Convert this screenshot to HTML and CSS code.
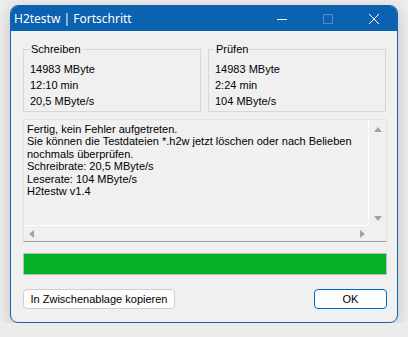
FILE: index.html
```html
<!DOCTYPE html>
<html lang="de">
<head>
  <meta charset="UTF-8" />
  <title>H2testw | Fortschritt</title>
  <link rel="stylesheet" href="styles.css">
</head>
<body>

<div class="window">
  <!-- Titelleiste -->
  <div class="titlebar">
    <span class="title">H2testw | Fortschritt</span>
    <div class="controls">
      <div class="ctl">
        <svg width="12" height="12" viewBox="0 0 12 12"><path d="M1 6.5h10" stroke="#fff" stroke-width="1"/></svg>
      </div>
      <div class="ctl">
        <svg width="12" height="12" viewBox="0 0 12 12"><rect x="1.5" y="1.5" width="9" height="9" fill="none" stroke="#4f8ccb" stroke-width="1"/></svg>
      </div>
      <div class="ctl">
        <svg width="12" height="12" viewBox="0 0 12 12"><path d="M1 1L11 11M11 1L1 11" stroke="#fff" stroke-width="1"/></svg>
      </div>
    </div>
  </div>

  <div class="content">
    <div class="groups">
      <fieldset class="group">
        <legend>Schreiben</legend>
        <div class="line">14983 MByte</div>
        <div class="line">12:10 min</div>
        <div class="line">20,5 MByte/s</div>
      </fieldset>
      <fieldset class="group">
        <legend>Prüfen</legend>
        <div class="line">14983 MByte</div>
        <div class="line">2:24 min</div>
        <div class="line">104 MByte/s</div>
      </fieldset>
    </div>

    <!-- Ausgabe -->
    <div class="log">
      <div class="log-text">Fertig, kein Fehler aufgetreten.
Sie können die Testdateien *.h2w jetzt löschen oder nach Belieben
nochmals überprüfen.
Schreibrate: 20,5 MByte/s
Leserate: 104 MByte/s
H2testw v1.4</div>
      <div class="vscroll">
        <span class="arr arr-up"></span>
        <span class="arr arr-down"></span>
      </div>
      <div class="hscroll">
        <span class="arr arr-left"></span>
        <span class="arr arr-right"></span>
      </div>
      <div class="corner"></div>
    </div>

    <div class="progress"><div class="progress-fill" style="width:100%"></div></div>

    <div class="buttons">
      <button class="btn btn-copy">In Zwischenablage kopieren</button>
      <button class="btn btn-ok">OK</button>
    </div>
  </div>
</div>

</body>
</html>
```

FILE: styles.css
```css
body { margin: 0; background: #ececec; font-family: "Liberation Sans", Arial, sans-serif; font-size: 11px; color: #000; }
.window { margin: 5px 0 0 10px; width: 386px; height: 316px; border: 1px solid #1662b0; border-radius: 8px; background: #f0f0f0; overflow: hidden; box-shadow: 0 4px 14px rgba(0,0,0,0.18); }
.titlebar { height: 25px; background: #0a62b0; display: flex; align-items: center; justify-content: space-between; }
.title { color: #fff; font-family: "Noto Sans", sans-serif; font-size: 12px; padding-left: 3px; }
.controls { display: flex; height: 100%; }
.ctl { width: 46px; display: flex; align-items: center; justify-content: center; }

.content { padding: 11px 10px 0 12px; }
.groups { display: grid; grid-template-columns: 178px 178px; gap: 7px; }
.group { margin: 0; padding: 5px 6px 2px; border: 1px solid #d7d7d7; min-width: 0; }
.group legend { padding: 0 1px; line-height: 14px; }
.line { height: 16px; line-height: 16px; }

.log { margin-top: 7px; height: 123px; display: grid; grid-template-columns: 1fr 17px; grid-template-rows: 1fr 15px; border-top: 1px solid #e3e3e3; border-left: 1px solid #e3e3e3; border-bottom: 1px solid #a0a0a0; border-right: 1px solid #e3e3e3; box-sizing: border-box; }
.log-text { white-space: pre; line-height: 12.4px; padding: 3px 0 0 3px; border-right: 1px solid #fff; border-bottom: 1px solid #fff; overflow: hidden; }
.vscroll { display: flex; flex-direction: column; justify-content: space-between; align-items: center; padding: 7px 0 5px; }
.hscroll { display: flex; justify-content: space-between; align-items: center; padding: 0 4px 0 5px; }
.arr { width: 0; height: 0; border: 4px solid transparent; }
.arr-up { border-bottom: 5px solid #a3a3a3; border-top: 0; }
.arr-down { border-top: 5px solid #a3a3a3; border-bottom: 0; }
.arr-left { border-right: 5px solid #a3a3a3; border-left: 0; }
.arr-right { border-left: 5px solid #a3a3a3; border-right: 0; }

.progress { margin-top: 11px; height: 22px; border: 1px solid #bcbcbc; box-sizing: border-box; background: #e6e6e6; }
.progress-fill { height: 100%; background: #06b025; }

.buttons { margin-top: 14px; display: flex; justify-content: space-between; }
.btn { height: 20px; padding: 0; background: #fdfdfd; border: 1px solid #d0d0d0; border-radius: 4px; font-family: "Liberation Sans", Arial, sans-serif; font-size: 11px; color: #000; white-space: nowrap; }
.btn-copy { width: 152px; }
.btn-ok { width: 73px; border-color: #0067c0; }
```
